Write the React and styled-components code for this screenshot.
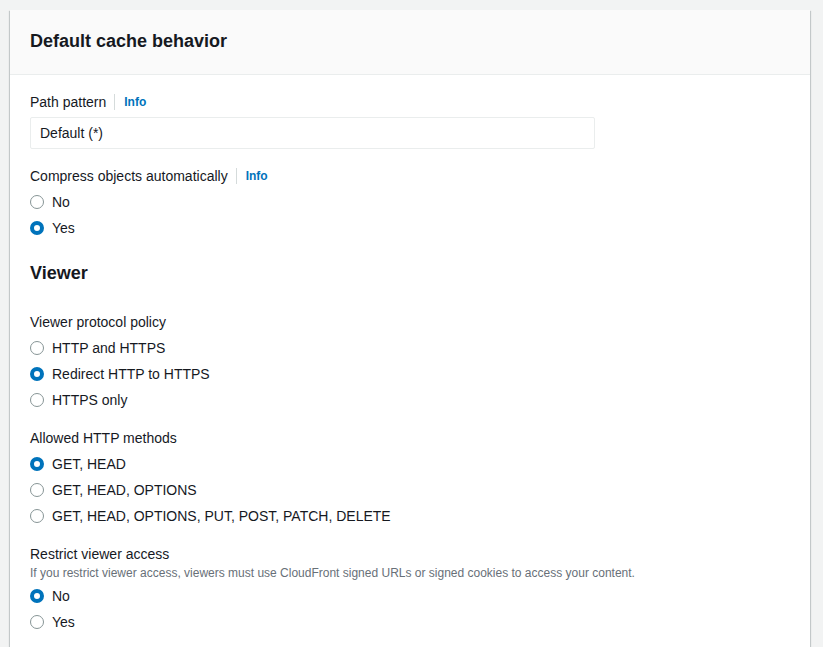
import React from 'react';
import styled, { createGlobalStyle } from 'styled-components';

const GlobalStyle = createGlobalStyle`
  html, body {
    margin: 0;
    padding: 0;
    background: #f2f3f3;
    font-family: "Liberation Sans", Arial, sans-serif;
    color: #16191f;
  }
`;

const Page = styled.div`
  padding: 10px 13px 0 10px;
  height: 647px;
  box-sizing: border-box;
  overflow: hidden;
`;

const Card = styled.section`
  background: #fff;
  box-shadow: 0 1px 1px 0 rgba(0, 28, 36, 0.3), 1px 1px 1px 0 rgba(0, 28, 36, 0.15),
    -1px 1px 1px 0 rgba(0, 28, 36, 0.15);
  min-height: 700px;
`;

const CardHeader = styled.header`
  height: 65px;
  box-sizing: border-box;
  background: #fafafa;
  border-bottom: 1px solid #eaeded;
  display: flex;
  align-items: center;
  padding: 0 20px 2px 20px;
`;

const Title = styled.h2`
  margin: 0;
  font-size: 18px;
  line-height: 24px;
  font-weight: 700;
  color: #16191f;
`;

const Body = styled.div`
  padding: 16px 20px 0 20px;
  display: flex;
  flex-direction: column;
`;

const Field = styled.div`
  display: flex;
  flex-direction: column;
  margin-top: ${(p) => p.$gap || 0}px;
`;

const LabelRow = styled.div`
  display: flex;
  align-items: center;
  height: 22px;
  font-size: 14px;
`;

const Separator = styled.span`
  width: 1px;
  height: 16px;
  background: #d5dbdb;
  margin: 0 9px 0 8px;
`;

const Info = styled.a`
  color: #0073bb;
  font-weight: 700;
  font-size: 12px;
  text-decoration: none;
`;

const Input = styled.div`
  margin-top: 4px;
  width: 565px;
  height: 32px;
  box-sizing: border-box;
  border: 1px solid #eaeded;
  border-radius: 2px;
  display: flex;
  align-items: center;
  padding-left: 9px;
  font-size: 14px;
`;

const Description = styled.div`
  font-size: 12px;
  line-height: 16px;
  color: #687078;
`;

const Options = styled.div`
  margin-top: 2px;
  display: flex;
  flex-direction: column;
`;

const Option = styled.label`
  height: 26px;
  display: flex;
  align-items: center;
  gap: 8px;
  font-size: 14px;
`;

const Dot = styled.span`
  width: 14px;
  height: 14px;
  box-sizing: border-box;
  border-radius: 50%;
  flex: none;
  border: ${(p) => (p.$on ? '4px solid #0073bb' : '1.5px solid #879596')};
  background: #fff;
`;

const Heading = styled.h3`
  margin: 20px 0 0 0;
  font-size: 18px;
  line-height: 24px;
  font-weight: 700;
`;

const RadioGroup = ({ items, value }) => (
  <Options>
    {items.map((it) => (
      <Option key={it}>
        <Dot $on={it === value} />
        {it}
      </Option>
    ))}
  </Options>
);

export default function App() {
  return (
    <>
      <GlobalStyle />
      <Page>
        <Card>
          <CardHeader>
            <Title>Default cache behavior</Title>
          </CardHeader>
          <Body>
            <Field>
              <LabelRow>
                Path pattern
                <Separator />
                <Info href="#">Info</Info>
              </LabelRow>
              <Input>Default (*)</Input>
            </Field>
            <Field $gap={16}>
              <LabelRow>
                Compress objects automatically
                <Separator />
                <Info href="#">Info</Info>
              </LabelRow>
              <RadioGroup items={['No', 'Yes']} value="Yes" />
            </Field>
            <Heading>Viewer</Heading>
            <Field $gap={26}>
              <LabelRow>Viewer protocol policy</LabelRow>
              <RadioGroup
                items={['HTTP and HTTPS', 'Redirect HTTP to HTTPS', 'HTTPS only']}
                value="Redirect HTTP to HTTPS"
              />
            </Field>
            <Field $gap={14}>
              <LabelRow>Allowed HTTP methods</LabelRow>
              <RadioGroup
                items={[
                  'GET, HEAD',
                  'GET, HEAD, OPTIONS',
                  'GET, HEAD, OPTIONS, PUT, POST, PATCH, DELETE',
                ]}
                value="GET, HEAD"
              />
            </Field>
            <Field $gap={14}>
              <LabelRow>Restrict viewer access</LabelRow>
              <Description>
                If you restrict viewer access, viewers must use CloudFront signed URLs or signed
                cookies to access your content.
              </Description>
              <RadioGroup items={['No', 'Yes']} value="No" />
            </Field>
          </Body>
        </Card>
      </Page>
    </>
  );
}
